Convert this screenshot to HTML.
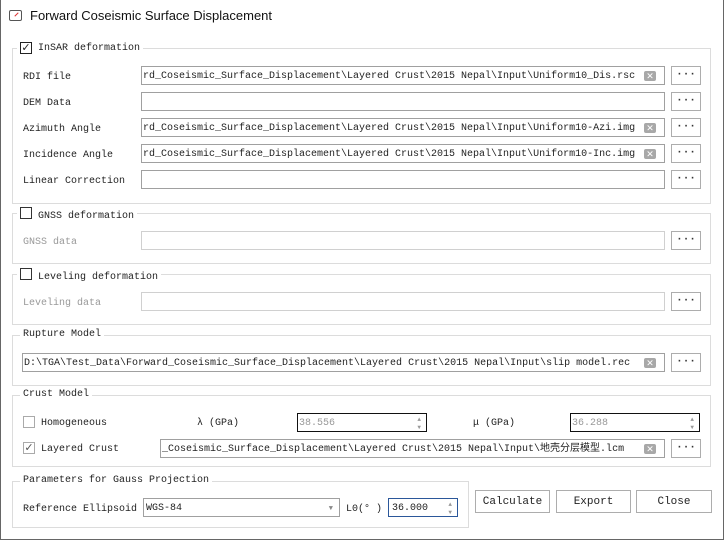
<!DOCTYPE html>
<html><head><meta charset="utf-8"><style>
body{margin:0;width:724px;height:541px;background:#fff;position:relative;overflow:hidden;font-family:"Liberation Mono","Noto Sans CJK SC",monospace;font-size:10px;color:#222}
.a{position:absolute}
.win{left:0;top:0;width:722px;height:539px;border:1px solid #666;border-top:none}
.gb{position:absolute;border:1px solid #dcdcdc}
.lg{position:absolute;background:#fff;padding:0 3px;line-height:12px;white-space:nowrap}
.lb{position:absolute;line-height:12px;white-space:nowrap;margin-top:2px}
.in{position:absolute;height:19px;border:1px solid #a0a0a0;background:#fff;line-height:20px;white-space:nowrap;overflow:hidden;padding-left:1px;box-sizing:border-box}
.dis{border-color:#d0d0d0}
.btn{position:absolute;width:30px;height:19px;border:1px solid #adadad;box-sizing:border-box;background:#fff;text-align:center;line-height:17px;font-size:11px;font-weight:bold;color:#333}
.x{position:absolute;width:12px;height:10px;background:#a8a8a8;border-radius:2px;color:#fff;font-size:9px;line-height:10px;text-align:center;font-family:"Liberation Sans",sans-serif}
.cb{position:absolute;width:11px;height:11px;border:1px solid #333;box-sizing:border-box;background:#fff;font-size:11px;line-height:9px;text-align:center;font-family:"DejaVu Sans",sans-serif}
.bb{position:absolute;height:23px;border:1px solid #adadad;box-sizing:border-box;background:#fff;text-align:center;line-height:23px;font-size:11px}
.gr{color:#999}
</style></head><body>
<div class="a win"></div>
<div class="a" style="left:9px;top:10px;width:13px;height:11px;border:1px solid #555;border-radius:2px;box-sizing:border-box"></div>
<div class="a" style="left:14px;top:14px;width:5px;height:1px;background:#d33;transform:rotate(-45deg)"></div>
<div class="a" style="left:30px;top:8px;font-family:'Liberation Sans',sans-serif;font-size:13px;color:#111">Forward Coseismic Surface Displacement</div>

<div class="gb" style="left:12px;top:48px;width:697px;height:154px"></div>
<div class="lg" style="left:17px;top:42px;padding-left:3px"><span class="cb" style="position:relative;display:inline-block;vertical-align:-1px;width:12px;height:12px;border-color:#222">✓</span> InSAR deformation</div>
<div class="lb" style="left:23px;top:70px">RDI file</div>
<div class="in" style="left:141px;top:66px;width:524px">rd_Coseismic_Surface_Displacement\Layered Crust\2015 Nepal\Input\Uniform10_Dis.rsc</div>
<div class="x" style="left:644px;top:71px">✕</div>
<div class="btn" style="left:671px;top:66px">···</div>
<div class="lb" style="left:23px;top:96px">DEM Data</div>
<div class="in" style="left:141px;top:92px;width:524px"></div>
<div class="btn" style="left:671px;top:92px">···</div>
<div class="lb" style="left:23px;top:122px">Azimuth Angle</div>
<div class="in" style="left:141px;top:118px;width:524px">rd_Coseismic_Surface_Displacement\Layered Crust\2015 Nepal\Input\Uniform10-Azi.img</div>
<div class="x" style="left:644px;top:123px">✕</div>
<div class="btn" style="left:671px;top:118px">···</div>
<div class="lb" style="left:23px;top:148px">Incidence Angle</div>
<div class="in" style="left:141px;top:144px;width:524px">rd_Coseismic_Surface_Displacement\Layered Crust\2015 Nepal\Input\Uniform10-Inc.img</div>
<div class="x" style="left:644px;top:149px">✕</div>
<div class="btn" style="left:671px;top:144px">···</div>
<div class="lb" style="left:23px;top:174px">Linear Correction</div>
<div class="in" style="left:141px;top:170px;width:524px"></div>
<div class="btn" style="left:671px;top:170px">···</div>

<div class="gb" style="left:12px;top:213px;width:697px;height:49px"></div>
<div class="lg" style="left:17px;top:207px"><span class="cb" style="position:relative;display:inline-block;vertical-align:-1px;width:12px;height:12px"></span> GNSS deformation</div>
<div class="lb gr" style="left:23px;top:235px">GNSS data</div>
<div class="in dis" style="left:141px;top:231px;width:524px"></div>
<div class="btn" style="left:671px;top:231px">···</div>

<div class="gb" style="left:12px;top:274px;width:697px;height:49px"></div>
<div class="lg" style="left:17px;top:268px"><span class="cb" style="position:relative;display:inline-block;vertical-align:-1px;width:12px;height:12px"></span> Leveling deformation</div>
<div class="lb gr" style="left:23px;top:296px">Leveling data</div>
<div class="in dis" style="left:141px;top:292px;width:524px"></div>
<div class="btn" style="left:671px;top:292px">···</div>

<div class="gb" style="left:12px;top:335px;width:697px;height:49px"></div>
<div class="lg" style="left:20px;top:329px">Rupture Model</div>
<div class="in" style="left:22px;top:353px;width:643px">D:\TGA\Test_Data\Forward_Coseismic_Surface_Displacement\Layered Crust\2015 Nepal\Input\slip model.rec</div>
<div class="x" style="left:644px;top:358px">✕</div>
<div class="btn" style="left:671px;top:353px">···</div>

<div class="gb" style="left:12px;top:395px;width:697px;height:70px"></div>
<div class="lg" style="left:20px;top:389px">Crust Model</div>
<div class="cb" style="left:23px;top:416px;width:12px;height:12px;border-color:#aaa"></div>
<div class="lb" style="left:41px;top:416px">Homogeneous</div>
<div class="lb" style="left:197px;top:416px">λ (GPa)</div>
<div class="in" style="left:297px;top:413px;width:130px;border-color:#111;color:#999">38.556<span style="position:absolute;right:5px;top:2px;font-size:6px;line-height:8px;color:#999">▲<br>▼</span></div>
<div class="lb" style="left:473px;top:416px">μ (GPa)</div>
<div class="in" style="left:570px;top:413px;width:130px;border-color:#111;color:#999">36.288<span style="position:absolute;right:5px;top:2px;font-size:6px;line-height:8px;color:#999">▲<br>▼</span></div>
<div class="cb" style="left:23px;top:442px;width:12px;height:12px;border-color:#aaa;color:#555">✓</div>
<div class="lb" style="left:41px;top:442px">Layered Crust</div>
<div class="in" style="left:160px;top:439px;width:505px">_Coseismic_Surface_Displacement\Layered Crust\2015 Nepal\Input\地壳分层模型.lcm</div>
<div class="x" style="left:644px;top:444px">✕</div>
<div class="btn" style="left:671px;top:439px">···</div>

<div class="gb" style="left:12px;top:481px;width:455px;height:45px"></div>
<div class="lg" style="left:20px;top:475px">Parameters for Gauss Projection</div>
<div class="lb" style="left:23px;top:502px">Reference Ellipsoid</div>
<div class="in" style="left:143px;top:498px;width:197px;height:19px;padding-left:2px">WGS-84<span style="position:absolute;right:6px;top:0;font-size:7px;color:#888">▼</span></div>
<div class="lb" style="left:346px;top:502px">L0(° )</div>
<div class="in" style="left:388px;top:498px;width:70px;height:19px;border-color:#2b579a;padding-left:3px">36.000<span style="position:absolute;right:5px;top:2px;font-size:6px;line-height:8px;color:#999">▲<br>▼</span></div>

<div class="bb" style="left:475px;top:490px;width:75px">Calculate</div>
<div class="bb" style="left:556px;top:490px;width:75px">Export</div>
<div class="bb" style="left:636px;top:490px;width:76px">Close</div>
</body></html>
